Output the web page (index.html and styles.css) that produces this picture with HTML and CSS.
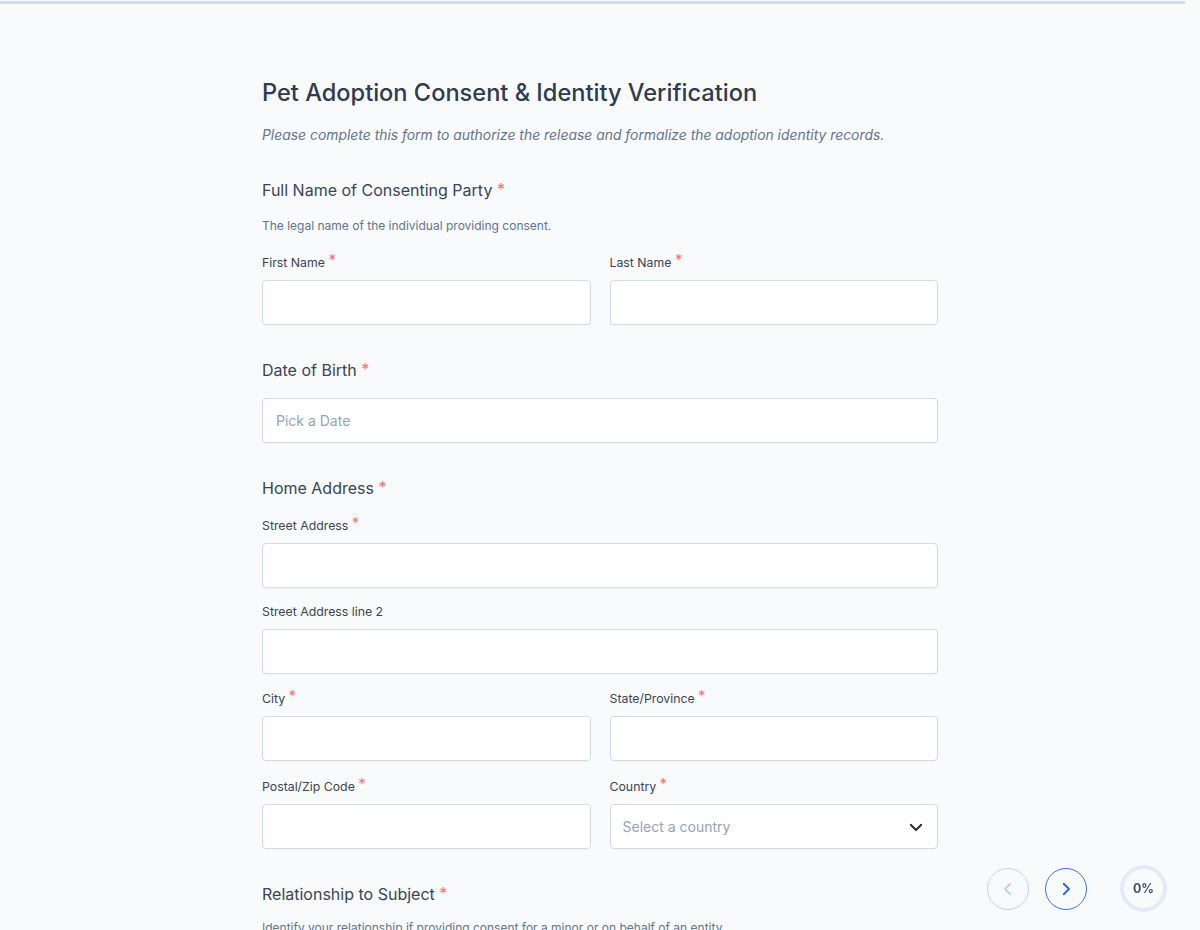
FILE: index.html
```html
<!DOCTYPE html>
<html lang="en">
<head>
    <meta charset="UTF-8">
    <meta name="viewport" content="width=device-width, initial-scale=1.0">
    <title>Pet Adoption Consent & Identity Verification</title>
    <link rel="stylesheet" href="styles.css">
</head>
<body>
    <div class="top-progress"></div>

    <form class="form-wrap">
        <h1>Pet Adoption Consent &amp; Identity Verification</h1>
        <p class="intro">Please complete this form to authorize the release and formalize the adoption identity records.</p>

        <!-- Full name -->
        <div class="section">
            <div class="section-title">Full Name of Consenting Party <span class="req">*</span></div>
            <div class="section-desc">The legal name of the individual providing consent.</div>
            <div class="row">
                <div class="field">
                    <label>First Name <span class="req">*</span></label>
                    <input type="text">
                </div>
                <div class="field">
                    <label>Last Name <span class="req">*</span></label>
                    <input type="text">
                </div>
            </div>
        </div>

        <!-- Date of birth -->
        <div class="section">
            <div class="section-title no-desc">Date of Birth <span class="req">*</span></div>
            <input type="text" placeholder="Pick a Date">
        </div>

        <!-- Address -->
        <div class="section">
            <div class="section-title no-desc">Home Address <span class="req">*</span></div>
            <div class="field">
                <label>Street Address <span class="req">*</span></label>
                <input type="text">
            </div>
            <div class="field">
                <label>Street Address line 2</label>
                <input type="text">
            </div>
            <div class="row">
                <div class="field">
                    <label>City <span class="req">*</span></label>
                    <input type="text">
                </div>
                <div class="field">
                    <label>State/Province <span class="req">*</span></label>
                    <input type="text">
                </div>
            </div>
            <div class="row">
                <div class="field">
                    <label>Postal/Zip Code <span class="req">*</span></label>
                    <input type="text">
                </div>
                <div class="field">
                    <label>Country <span class="req">*</span></label>
                    <div class="select">
                        <span>Select a country</span>
                        <svg width="18" height="18" viewBox="0 0 24 24" fill="none" stroke="#1e293b" stroke-width="2.4" stroke-linecap="round" stroke-linejoin="round"><path d="M5 9l7 7 7-7"/></svg>
                    </div>
                </div>
            </div>
        </div>

        <!-- Relationship -->
        <div class="section">
            <div class="section-title">Relationship to Subject <span class="req">*</span></div>
            <div class="section-desc">Identify your relationship if providing consent for a minor or on behalf of an entity.</div>
        </div>
    </form>

    <!-- floating navigation -->
    <div class="nav">
        <button class="nav-btn prev" type="button">
            <svg width="18" height="18" viewBox="0 0 24 24" fill="none" stroke="currentColor" stroke-width="2" stroke-linecap="round" stroke-linejoin="round"><path d="M15 5l-7 7 7 7"/></svg>
        </button>
        <button class="nav-btn next" type="button">
            <svg width="18" height="18" viewBox="0 0 24 24" fill="none" stroke="currentColor" stroke-width="2.4" stroke-linecap="round" stroke-linejoin="round"><path d="M9 5l7 7-7 7"/></svg>
        </button>
        <div class="progress-ring">0%</div>
    </div>
</body>
</html>
```

FILE: styles.css
```css
* {
    margin: 0;
    padding: 0;
    box-sizing: border-box;
    font-family: Inter, 'Noto Sans', sans-serif;
}

body {
    background: #f8fafc;
    color: #334155;
    height: 930px;
    overflow: hidden;
}

.top-progress {
    position: fixed;
    top: 1px;
    left: 0;
    width: 1185px;
    height: 3px;
    background: #cfdef7;
}

.form-wrap {
    width: 676px;
    margin: 0 auto;
    padding-top: 77px;
}

h1 {
    font-size: 23.6px;
    line-height: 32px;
    font-weight: 500;
    color: #2f3b4f;
    margin-bottom: 16px;
}

.intro {
    font-size: 13.9px;
    line-height: 20px;
    font-style: italic;
    color: #64748b;
    margin-bottom: 33px;
}

.section {
    margin-bottom: 33px;
}

.section > :last-child,
.section > .row:last-child .field {
    margin-bottom: 0;
}

.section-title {
    font-size: 16px;
    line-height: 24px;
    font-weight: 400;
    color: #3a4456;
    margin-bottom: 16px;
}

.section-desc {
    font-size: 12px;
    line-height: 16px;
    color: #64748b;
    margin-bottom: 19px;
}

.req {
    color: #f87171;
    font-size: 16px;
    position: relative;
    top: -1px;
}

.row {
    display: grid;
    grid-template-columns: 1fr 1fr;
    column-gap: 19px;
}

.field {
    margin-bottom: 15px;
}

.row .field {
    margin-bottom: 16px;
}

.field label {
    display: block;
    font-size: 12.3px;
    line-height: 18px;
    color: #3a4456;
    margin-bottom: 8px;
}

.field label .req {
    font-size: 15px;
    top: -2px;
}

input,
.select {
    display: block;
    width: 100%;
    height: 45px;
    background: #fff;
    border: 1px solid #d3dbe6;
    border-radius: 4px;
    padding: 0 13px;
    font-size: 14px;
    color: #334155;
    box-shadow: 0 1px 1px rgba(15, 23, 42, 0.03);
}

input::placeholder {
    color: #94a3b8;
}

.select {
    display: flex;
    align-items: center;
    justify-content: space-between;
    padding: 0 12px 0 12px;
    color: #94a3b8;
}

.select svg {
    display: block;
}

.section:last-child .section-title {
    margin-bottom: 14px;
}

/* floating navigation */
.nav {
    position: fixed;
    left: 987px;
    top: 865px;
    display: flex;
    align-items: center;
}

.nav-btn {
    width: 42px;
    height: 42px;
    border-radius: 50%;
    background: transparent;
    display: flex;
    align-items: center;
    justify-content: center;
    cursor: pointer;
}

.nav-btn.prev {
    border: 1.5px solid #bfd3f7;
    color: #a9c3f3;
    margin-right: 16px;
}

.nav-btn.next {
    border: 1.5px solid #3b72e6;
    color: #2f63d8;
    margin-right: 33px;
}

.progress-ring {
    width: 47px;
    height: 47px;
    border-radius: 50%;
    border: 4px solid #e3eaf8;
    display: flex;
    align-items: center;
    justify-content: center;
    font-size: 12.5px;
    font-weight: 700;
    color: #475569;
}
```
